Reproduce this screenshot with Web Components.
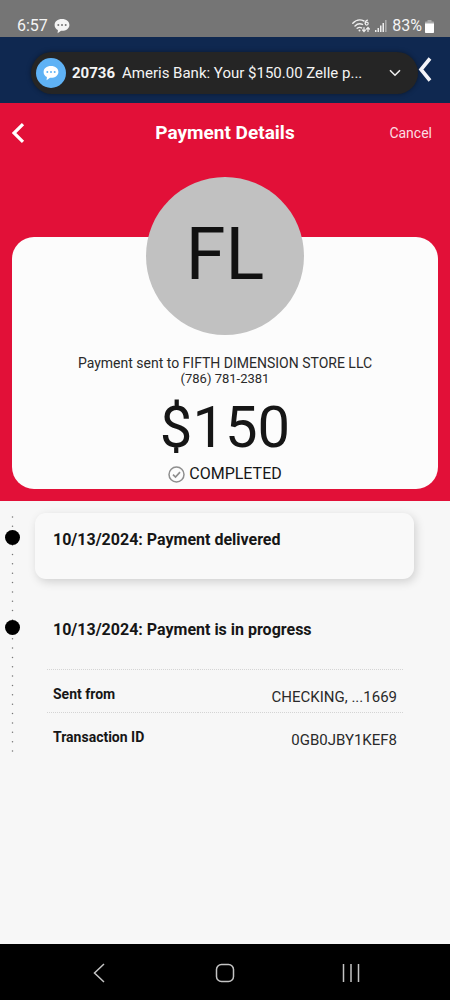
<!DOCTYPE html>
<html lang="en">
<head>
<meta charset="utf-8">
<meta name="viewport" content="width=device-width, initial-scale=1">
<title>Payment Details</title>
<style>
  html, body { height: 100%; }
  body { margin: 0; font-family: Roboto, "Liberation Sans", sans-serif; color: #161616; background: #f7f7f7; }
</style>
</head>
<body>
<phone-screen>
  <status-bar slot="top" time="6:57" battery="83%"></status-bar>
  <app-bar slot="top">
    <message-pill sender="20736">Ameris Bank: Your $150.00 Zelle p...</message-pill>
  </app-bar>
  <payment-hero heading="Payment Details">
    <payment-card initials="FL" amount="$150" state="COMPLETED">
      <span slot="payee">Payment sent to FIFTH DIMENSION STORE LLC</span>
      <span slot="phone">(786) 781-2381</span>
    </payment-card>
  </payment-hero>
  <payment-timeline>
    <timeline-step raised>10/13/2024: Payment delivered</timeline-step>
    <timeline-step>10/13/2024: Payment is in progress</timeline-step>
    <detail-list slot="details"></detail-list>
  </payment-timeline>
  <nav-bar slot="bottom"></nav-bar>
</phone-screen>

<script>
const define = (name, markup, setup) => {
  const template = document.createElement('template');
  template.innerHTML = markup;
  customElements.define(name, class extends HTMLElement {
    constructor() {
      super();
      this.attachShadow({ mode: 'open' }).append(template.content.cloneNode(true));
    }
    connectedCallback() {
      if (setup) setup(this, id => this.shadowRoot.getElementById(id));
    }
  });
};
const reset = `*{box-sizing:border-box} svg{display:block;flex:none}
  button{font:inherit;color:inherit;background:none;border:0;padding:0;margin:0;display:block}`;

define('phone-screen', `<style>${reset}
  :host{display:flex;flex-direction:column;min-height:100vh}
  main{flex:1}
</style>
<slot name="top"></slot><main><slot></slot></main><slot name="bottom"></slot>`);

define('status-bar', `<style>${reset}
  :host{display:flex;align-items:flex-end;justify-content:space-between;height:37px;box-sizing:border-box;
    padding:0 16px 1px 17px;background:#757575;color:#f4f4f4;font-size:16px;line-height:20px}
  div{display:flex;align-items:center}
  .left{gap:6px}
  .right{gap:5px}
  .charge{gap:3px}
</style>
<div class="left"><span id="time"></span>
  <svg width="16" height="16" viewBox="0 0 16 16"><path fill="#f4f4f4" d="M8 1C3.6 1 .6 3.5.6 6.9c0 2.4 1.3 4.2 3.300 5.100L3.600 15.200 7 12.800c5 .3 8.400-2.300 8.400-5.900C15.400 3.500 12.400 1 8 1z"/><g fill="#757575"><circle cx="4.300" cy="7" r="1"/><circle cx="8" cy="7" r="1"/><circle cx="11.700" cy="7" r="1"/></g></svg>
</div>
<div class="right">
  <svg width="18" height="16" viewBox="0 0 18 16" fill="none" stroke="#eee" stroke-linecap="round">
    <path stroke-width="1.400" d="M.8 5.200C4 1.800 8.500 1.300 12 3M3 7.900c2.200-2.100 5-2.600 7.500-1.500M5.200 10.300c1.400-1.100 3-1.200 4.400-.4"/>
    <circle cx="7.500" cy="12.500" r="1" fill="#eee" stroke="none"/>
    <path stroke-width="1.200" d="M15.500 2.200c-1.600.3-2.300 1.500-2.300 3"/><circle cx="14.700" cy="5.600" r="1.500" stroke-width="1.200"/>
    <path stroke-width="1.200" d="M12 9.500v4M10.600 12l1.400 1.600 1.400-1.600M16 13.500v-4M14.600 11L16 9.400l1.400 1.600"/>
  </svg>
  <svg width="12" height="14" viewBox="0 0 12 14" fill="#eee"><path d="M0 11h1.500v2H0zM2.500 9H4v4H2.500zM5 6.500h1.500V13H5zM7.500 4H9v9H7.500z"/><path fill="#aaa" d="M10 1h1.600v12H10z"/></svg>
  <div class="charge"><span id="battery"></span>
  <svg width="9" height="13" viewBox="0 0 9 13"><path fill="#aaa" d="M2.500 0h4v1.500H8c.6 0 1 .4 1 1V4H0V2.500c0-.6.4-1 1-1h1.500z"/><path fill="#fff" d="M0 3.500h9V12c0 .6-.4 1-1 1H1c-.6 0-1-.4-1-1z"/></svg></div>
</div>`, (el, $) => {
  $('time').textContent = el.getAttribute('time');
  $('battery').textContent = el.getAttribute('battery');
});

define('app-bar', `<style>${reset}
  :host{display:flex;align-items:center;height:66px;box-sizing:border-box;padding:6px 18px 0 31px;background:#0f2850}
  slot{display:block;flex:1;min-width:0}
  button{padding-bottom:6px}
</style>
<slot></slot>
<button aria-label="Back"><svg width="14" height="26" viewBox="0 0 14 26"><path fill="none" stroke="#f4f4f8" stroke-width="3.600" d="M12 1.500 3 12.500l9 11"/></svg></button>`);

define('message-pill', `<style>${reset}
  :host{display:flex;align-items:center;min-width:0;height:42px;box-sizing:border-box;padding:0 17px 0 5px;border-radius:21px;
    background:#252525;color:#f4f4f4;font-size:15px;line-height:20px;box-shadow:0 0 5px #0006}
  .avatar{display:grid;place-items:center;width:30px;height:30px;border-radius:50%;background:#5fb2f5;margin-right:6px;flex:none}
  b{font-weight:700;margin-right:7px}
  .text{min-width:0;overflow:hidden;white-space:nowrap;text-overflow:ellipsis}
  button{margin-left:auto}
</style>
<span class="avatar"><svg width="16" height="16" viewBox="0 0 16 16"><path fill="#fff" d="M8 1C3.600 1 .6 3.500.6 6.900c0 2.400 1.300 4.200 3.300 5.100L3.600 15.200 7 12.800c5 .3 8.400-2.300 8.400-5.900C15.400 3.500 12.400 1 8 1z"/><g fill="#5fb2f5"><circle cx="4.300" cy="7" r="1"/><circle cx="8" cy="7" r="1"/><circle cx="11.700" cy="7" r="1"/></g></svg></span>
<b id="sender"></b><span class="text"><slot></slot></span>
<button aria-label="Expand"><svg width="12" height="8" viewBox="0 0 12 8"><path fill="none" stroke="#eee" stroke-width="1.600" d="m1 1.200 5 5 5-5"/></svg></button>`,
(el, $) => { $('sender').textContent = el.getAttribute('sender'); });

define('payment-hero', `<style>${reset}
  :host{display:block;background:#e21038;padding:0 12px 12px}
  header{display:grid;grid-template-columns:1fr auto 1fr;align-items:center;height:60px;color:#fff}
  h1{margin:0;font-size:19px;line-height:24px;font-weight:700}
  .cancel{justify-self:end;font-size:14px;line-height:20px;margin-right:6px;color:#fbdde3}
</style>
<header>
  <button aria-label="Back"><svg width="14" height="20" viewBox="0 0 14 20"><path fill="none" stroke="#fff" stroke-width="3.200" d="M11 1.200 2 10l9 8.800"/></svg></button>
  <h1 id="h"></h1>
  <button class="cancel">Cancel</button>
</header>
<slot></slot>`, (el, $) => { $('h').textContent = el.getAttribute('heading'); });

define('payment-card', `<style>${reset}
  :host{display:flex;flex-direction:column;align-items:center;margin-top:74px;padding-bottom:5px;border-radius:22px;
    background:#fcfcfc;text-align:center;color:#161616}
  .avatar{display:grid;place-items:center;width:158px;height:158px;padding-bottom:2px;border-radius:50%;background:#c1c1c1;
    margin-top:-60px;margin-bottom:20px;font-size:72px;line-height:80px;color:#111}
  .line{font-size:14px;line-height:16px;color:#2a2a2a}
  .phone{font-size:13px}
  .amount{font-size:58px;line-height:72px;margin-top:4px}
  .state{display:flex;align-items:center;gap:4px;font-size:16px;line-height:20px;margin-top:1px}
</style>
<div class="avatar" id="initials"></div>
<div class="line"><slot name="payee"></slot></div>
<div class="line phone"><slot name="phone"></slot></div>
<div class="amount" id="amount"></div>
<div class="state"><svg width="17" height="17" viewBox="0 0 17 17" fill="none" stroke="#8e8e8e"><circle cx="8.500" cy="8.500" r="7.500" stroke-width="1.500"/><path stroke-width="1.700" d="m5 8.600 2.500 2.400 4.500-4.800"/></svg><span id="state"></span></div>`,
(el, $) => { for (const k of ['initials', 'amount', 'state']) $(k).textContent = el.getAttribute(k); });

define('payment-timeline', `<style>${reset}
  :host{display:grid;grid-template-columns:13px 1fr;padding:12px 36px 0 6px}
  .rail{padding-top:3px}
  .steps{padding-left:16px;min-width:0}
</style>
<div class="rail"><svg width="13" height="238" viewBox="0 0 13 238"><path d="M6.500 1v236" stroke="#777" stroke-width="1.500" stroke-linecap="round" stroke-dasharray="0 9.360"/></svg></div>
<div class="steps"><slot></slot><slot name="details"></slot></div>`);

define('timeline-step', `<style>${reset}
  :host{display:flex;position:relative;height:66px;box-sizing:border-box;padding:17px 18px;margin-bottom:24px;border-radius:11px;
    font-size:16px;line-height:20px;font-weight:700;color:#161616}
  :host([raised]){background:#f9f9f9;box-shadow:2px 3px 10px #00000028}
  :host(:not([raised])){margin-bottom:0}
  .dot{position:absolute;left:-30px;top:17px;width:15px;height:15px;border-radius:50%;background:#000}
</style><span class="dot"></span><span><slot></slot></span>`);

define('detail-list', `<style>${reset}
  :host{display:block;margin:0 11px 0 12px}
  table{width:100%;border-collapse:collapse}
  tr{border-top:1px dotted #d4d4d4}
  th,td{height:43px;vertical-align:top;line-height:20px}
  th{padding:14px 0 0 6px;text-align:left;font-size:14px;font-weight:700;color:#161616}
  td{padding:17px 6px 0 0;text-align:right;font-size:15px;color:#2a2a2a}
</style>
<table>
  <tr><th scope="row">Sent from</th><td>CHECKING, ...1669</td></tr>
  <tr><th scope="row">Transaction ID</th><td>0GB0JBY1KEF8</td></tr>
</table>`);

define('nav-bar', `<style>${reset}
  :host{display:block;background:#000}
  nav{display:grid;grid-template-columns:repeat(3,1fr);height:56px;align-items:center;padding:2px 36px 0}
  button{justify-self:center}
</style>
<nav>
  <button aria-label="Back"><svg width="20" height="20" viewBox="0 0 20 20"><path fill="none" stroke="#c4c4c4" stroke-width="1.500" d="M15 1 5.500 10l9.500 9"/></svg></button>
  <button aria-label="Home"><svg width="20" height="20" viewBox="0 0 20 20"><rect x="1.500" y="1.500" width="17" height="17" rx="5" fill="none" stroke="#c4c4c4" stroke-width="1.500"/></svg></button>
  <button aria-label="Recent apps"><svg width="20" height="20" viewBox="0 0 20 20"><path stroke="#c4c4c4" stroke-width="1.500" d="M2.500 1v18M10 1v18M17.500 1v18"/></svg></button>
</nav>`);
</script>
</body>
</html>
